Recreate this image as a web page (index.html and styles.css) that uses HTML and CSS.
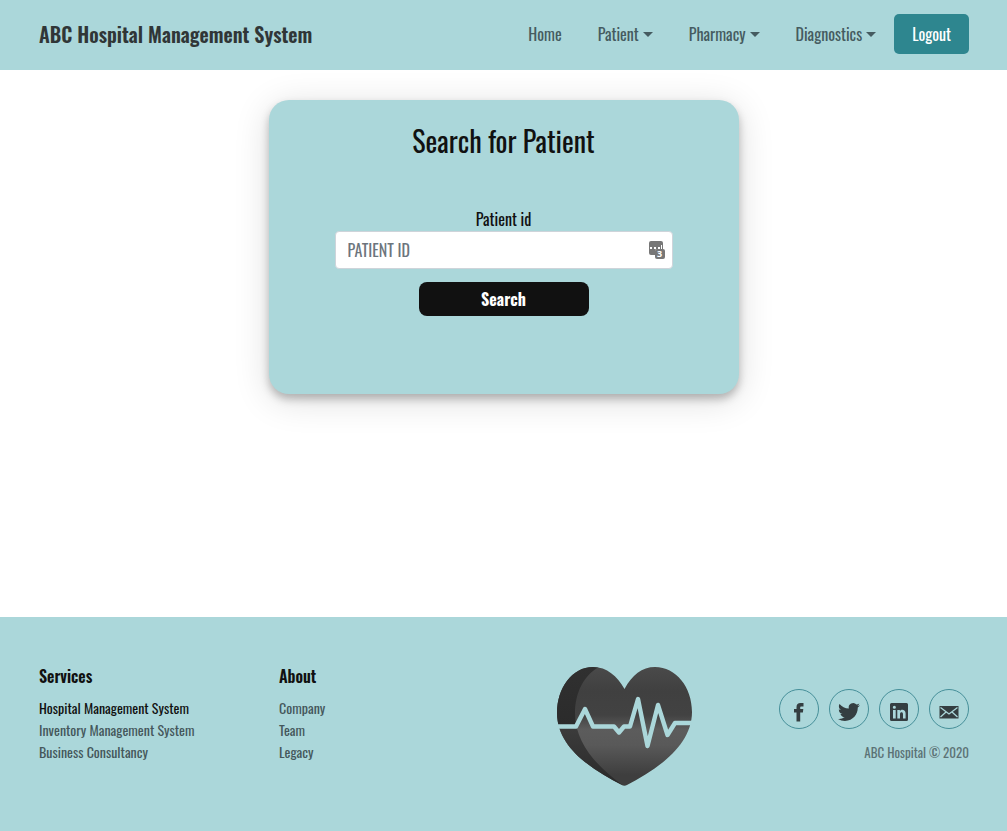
FILE: index.html
```html
<!DOCTYPE html>
<html lang="en">
<head>
  <meta charset="utf-8">
  <meta name="viewport" content="width=device-width, initial-scale=1">
  <title>ABC Hospital Management System</title>
  <link rel="stylesheet" href="styles.css">
</head>
<body>
  <header class="navbar">
    <a class="brand" href="#">ABC Hospital Management System</a>
    <nav class="nav">
      <a class="nav-link" href="#">Home</a>
      <button class="nav-link" type="button">Patient<span class="caret"></span></button>
      <button class="nav-link" type="button">Pharmacy<span class="caret"></span></button>
      <button class="nav-link" type="button">Diagnostics<span class="caret"></span></button>
      <button class="logout" type="button">Logout</button>
    </nav>
  </header>

  <main class="main">
    <form class="card">
      <h1 class="card-title">Search for Patient</h1>
      <label class="label" for="patient-id">Patient id</label>
      <div class="field">
        <input class="input" id="patient-id" type="text" placeholder="PATIENT ID">
        <span class="manager">
          <svg width="16" height="18" viewBox="0 0 16 18" aria-hidden="true">
            <path fill="#777" d="M2 0h10a2 2 0 0 1 2 2v6h-6a2 2 0 0 0-2 2v4H2a2 2 0 0 1-2-2V2a2 2 0 0 1 2-2z"/>
            <path fill="#fff" d="M1 6h2v2H1zM5 6h2v2H5zM9 6h2v2H9zM12 4h1v4h-1z"/>
            <rect x="6" y="8" width="10" height="10" rx="2" fill="#777"/>
          </svg>
          <span class="manager-count">3</span>
        </span>
      </div>
      <button class="search" type="submit">Search</button>
    </form>
  </main>

  <footer class="footer">
    <section class="links">
      <h2 class="links-title">Services</h2>
      <a class="link link-active" href="#">Hospital Management System</a>
      <a class="link" href="#">Inventory Management System</a>
      <a class="link" href="#">Business Consultancy</a>
    </section>
    <section class="links">
      <h2 class="links-title">About</h2>
      <a class="link" href="#">Company</a>
      <a class="link" href="#">Team</a>
      <a class="link" href="#">Legacy</a>
    </section>
    <svg class="heart" width="136" height="120" viewBox="0 0 136 120" role="img" aria-label="Heart with pulse line">
      <defs>
        <linearGradient id="front" x1="0" y1="0" x2="0" y2="1">
          <stop offset="0" stop-color="#4a4a4a"/>
          <stop offset=".2" stop-color="#404040"/>
          <stop offset=".4" stop-color="#424242"/>
          <stop offset=".52" stop-color="#5c5c5c"/>
          <stop offset=".65" stop-color="#595959"/>
          <stop offset=".9" stop-color="#3e3e3e"/>
        </linearGradient>
        <linearGradient id="side" x1="0" y1="0" x2="0" y2="1">
          <stop offset="0" stop-color="#303030"/>
          <stop offset=".5" stop-color="#2b2b2b"/>
          <stop offset=".5" stop-color="#3c3c3c"/>
          <stop offset="1" stop-color="#292929"/>
        </linearGradient>
        <clipPath id="heart-shape">
          <path d="M67.500 22C60 9 50 0 36 0 15 0 0 21 0 46c0 36 38 58 65 72q2.500 1.500 5 0C97 104 135 80 135 45 135 20 119 0 98 0 85 0 75 8 67.500 22z"/>
        </clipPath>
      </defs>
      <g clip-path="url(#heart-shape)">
        <rect width="136" height="120" fill="url(#front)"/>
        <path fill="url(#side)" d="M0 0h42C27 8 18 26 18 46c0 34 28 58 50 74H0z"/>
      </g>
      <path fill="none" stroke="#abd7da" stroke-width="4.400" stroke-linejoin="round" d="M0 59.500h19L28 42l8 17.500h21l5 6 5-6h6L81 32l9.500 47L101 38l9.500 30 7.500-12h18"/>
    </svg>
    <section class="contact">
      <div class="social">
        <a class="social-link" href="#" aria-label="Facebook">
          <svg width="22" height="22" viewBox="0 0 22 22"><path fill="#343e41" d="M8.500 20.500v-9H6V8h2.500V6.100C8.500 3.200 10 2 12.500 2h3v3.400h-2c-1 0-1.300.4-1.300 1.200V8h3.100l-.4 3.500h-2.700v9z"/></svg>
        </a>
        <a class="social-link" href="#" aria-label="Twitter">
          <svg width="22" height="22" viewBox="0 0 24 24"><path fill="#343e41" d="M23.950 4.570a10 10 0 0 1-2.820.77 4.960 4.960 0 0 0 2.160-2.720c-.95.55-2 .95-3.120 1.180a4.920 4.920 0 0 0-8.380 4.480C7.690 8.090 4.070 6.130 1.640 3.160a4.820 4.820 0 0 0-.67 2.480c0 1.710.87 3.210 2.190 4.100a4.900 4.900 0 0 1-2.230-.62v.06a4.920 4.920 0 0 0 3.950 4.830 5 5 0 0 1-2.210.08 4.940 4.940 0 0 0 4.600 3.420A9.870 9.870 0 0 1 0 19.540a14 14 0 0 0 7.550 2.210c9.050 0 14-7.500 14-13.990 0-.21 0-.42-.02-.63a9.940 9.940 0 0 0 2.460-2.550z"/></svg>
        </a>
        <a class="social-link" href="#" aria-label="LinkedIn">
          <svg width="22" height="22" viewBox="0 0 22 22"><path fill="#343e41" fill-rule="evenodd" d="M3.500 2h15A1.500 1.500 0 0 1 20 3.500v15a1.500 1.500 0 0 1-1.500 1.500h-15A1.500 1.500 0 0 1 2 18.500v-15A1.500 1.500 0 0 1 3.500 2zM5 9v8.500h2.700V9zM6.350 4.700a1.550 1.550 0 1 0 0 3.100 1.550 1.550 0 0 0 0-3.100zM9.300 9v8.500H12v-4.300c0-2.500 3-2.500 3 0v4.300h2.600v-5c0-4-4.200-4.600-5.700-2.300V9z"/></svg>
        </a>
        <a class="social-link" href="#" aria-label="Email">
          <svg width="22" height="22" viewBox="0 0 22 22"><path fill="#343e41" d="M1.500 5h19v12.500h-19z"/><path fill="none" stroke="#abd7da" stroke-width="1.300" d="M2.500 6.500L11 13l8.500-6.500M2.500 16L8 11M19.500 16L14 11"/></svg>
        </a>
      </div>
      <p class="copyright">ABC Hospital © 2020</p>
    </section>
  </footer>
</body>
</html>
```
FILE: styles.css
```css
* {
  box-sizing: border-box;
}

body {
  display: flex;
  flex-direction: column;
  min-height: 100vh;
  margin: 0;
  background: #fff;
  color: #111;
  font: 16px/24px Oswald, "Roboto Condensed", "Liberation Sans Narrow", "Open Sans Condensed", Roboto, sans-serif;
}

a {
  color: inherit;
  text-decoration: none;
}

button,
input {
  font: inherit;
}

.navbar {
  display: flex;
  align-items: center;
  justify-content: space-between;
  min-height: 70px;
  padding: 14px 38px 16px 39px;
  background: #abd7da;
}

.brand {
  color: #303637;
  font-size: 20px;
  font-weight: 600;
}

.nav {
  display: flex;
  align-items: center;
}

.nav-link {
  display: flex;
  align-items: center;
  gap: 4px;
  padding: 8px 18px;
  border: 0;
  background: none;
  color: #455b60;
  cursor: pointer;
}

.caret {
  border: 5px solid transparent;
  border-top-color: currentColor;
  border-bottom: 0;
}

.logout {
  height: 40px;
  padding: 0 18px;
  border: 0;
  border-radius: 5px;
  background: #2e868f;
  color: #fff;
}

.main {
  flex: 1;
  padding: 30px 16px;
}

.card {
  display: flex;
  flex-direction: column;
  align-items: center;
  width: 100%;
  max-width: 470px;
  margin: 0 auto;
  padding: 23px 66px 78px;
  border-radius: 20px;
  background: #abd7da;
  box-shadow: 0 5px 8px rgba(0, 0, 0, 0.25), 0 6px 36px rgba(0, 0, 0, 0.14);
}

.card-title {
  margin: 0 0 48px;
  font-size: 28px;
  font-weight: 400;
  line-height: 36px;
}

.field {
  position: relative;
  width: 100%;
}

.input {
  display: block;
  width: 100%;
  height: 38px;
  padding: 6px 36px 6px 12px;
  border: 1px solid #ced4da;
  border-radius: 4px;
  background: #fff;
}

.input::placeholder {
  color: #6c757d;
  opacity: 1;
}

.manager {
  position: absolute;
  top: 10px;
  right: 8px;
  width: 16px;
  height: 18px;
}

.manager svg {
  display: block;
}

.manager-count {
  position: absolute;
  right: 0;
  bottom: 0;
  width: 10px;
  color: #fff;
  font: 700 9px/10px "Open Sans", sans-serif;
  text-align: center;
}

.search {
  width: 170px;
  height: 34px;
  margin-top: 13px;
  padding: 0;
  border: 0;
  border-radius: 8px;
  background: #111;
  color: #fff;
  font-weight: 700;
}

.footer {
  display: grid;
  grid-template-columns: 240px 240px 1fr auto;
  min-height: 214px;
  padding: 47px 38px 44px 39px;
  background: #abd7da;
}

.links {
  display: flex;
  flex-direction: column;
  align-items: flex-start;
}

.links-title {
  margin: 0 0 9px;
  font-size: 16px;
  font-weight: 600;
  line-height: 24px;
}

.link {
  color: #45585c;
  font-size: 14px;
  line-height: 22px;
}

.link-active {
  color: #111;
}

.heart {
  margin: 3px auto 0 38px;
}

.contact {
  display: flex;
  flex-direction: column;
  align-items: flex-end;
  padding-top: 25px;
}

.social {
  display: flex;
  gap: 10px;
}

.social-link {
  display: flex;
  align-items: center;
  justify-content: center;
  width: 40px;
  height: 40px;
  padding-top: 5px;
  border: 1px solid #468f99;
  border-radius: 50%;
}

.copyright {
  margin: 11px 0 0;
  color: #5b7275;
  font-size: 13px;
}
```
